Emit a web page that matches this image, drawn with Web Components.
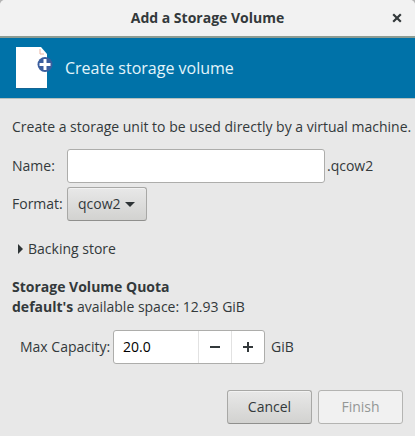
<!DOCTYPE html>
<html lang="en">
<head>
<meta charset="utf-8">
<title>Add a Storage Volume</title>
<style>
html {
	height: 100%;
	background: #b4b4b4;
}

body {
	margin: 0;
	min-height: 100%;
	font: 14px/20px "Open Sans", "Noto Sans", sans-serif;
	color: #33393b;
}
</style>
</head>
<body>
<volume-dialog>
	<title-bar slot="header">Add a Storage Volume</title-bar>
	<page-banner slot="header">Create storage volume</page-banner>

	<volume-form></volume-form>
	<backing-store>Backing store</backing-store>
	<volume-quota pool="default" available="12.93 GiB"></volume-quota>

	<push-button slot="actions">Cancel</push-button>
	<push-button slot="actions" disabled>Finish</push-button>
</volume-dialog>

<script>
const makeTemplate = (html) => {
	const template = document.createElement('template');
	template.innerHTML = html;
	return template;
}

class BaseElement extends HTMLElement {
	constructor() {
		super();

		const shadowRoot = this.attachShadow({mode: 'open'});
		shadowRoot.appendChild(this.constructor.template.content.cloneNode(true));
	}
}

class VolumeDialog extends BaseElement {
	static template = makeTemplate(`
<style>
:host {
	display: flex;
	flex-direction: column;
	box-sizing: border-box;
	min-height: 100vh;
	overflow: hidden;
	border-radius: 5px 5px 0 0;
	background: #e8e8e8;
}

main {
	display: flex;
	flex: 1;
	flex-direction: column;
	padding: 18px 12px 0;
	white-space: nowrap;
}

p {
	margin: 0 0 12px;
}

footer {
	display: flex;
	justify-content: flex-end;
	gap: 6px;
	padding: 12px;
}
</style>

<slot name="header"></slot>
<main>
	<p>Create a storage unit to be used directly by a virtual machine.</p>
	<slot></slot>
</main>
<footer><slot name="actions"></slot></footer>
`);
}
customElements.define('volume-dialog', VolumeDialog);

class TitleBar extends BaseElement {
	static template = makeTemplate(`
<style>
:host {
	display: grid;
	grid-template-columns: 36px 1fr 36px;
	align-items: center;
	height: 36px;
	background: #f2f2f2;
	border-bottom: 2px solid #8d9c93;
}

h1 {
	grid-column: 2;
	margin: 0;
	font-size: 14px;
	line-height: 20px;
	text-align: center;
}

button {
	display: grid;
	place-items: center;
	height: 36px;
	padding: 0;
	border: 0;
	background: none;
	color: inherit;
}
</style>

<h1><slot></slot></h1>
<button type="button" aria-label="Close">
	<svg width="10" height="10" viewBox="0 0 10 10" fill="none" stroke="currentColor" stroke-width="2.2">
		<path d="M1.2 1.2 8.8 8.8M8.8 1.2 1.2 8.8"/>
	</svg>
</button>
`);
}
customElements.define('title-bar', TitleBar);

class PageBanner extends BaseElement {
	static template = makeTemplate(`
<style>
:host {
	display: flex;
	align-items: center;
	gap: 11px;
	height: 60px;
	padding-left: 14px;
	background: #0072a8;
	border-bottom: 1px solid #b4c0bd;
	color: #e3f5fb;
}

h2 {
	margin: 0;
	font-size: 16px;
	font-weight: normal;
	line-height: 24px;
}
</style>

<svg width="40" height="44" viewBox="0 0 40 44" aria-hidden="true">
	<path d="M2 2H27L33 8V43H2Z" fill="#29567d" opacity=".5"/>
	<path d="M2 1H27L33 8V42H2Z" fill="#fff"/>
	<path d="M26 3V8H30" fill="none" stroke="#e9b5a4"/>
	<circle cx="31" cy="18.5" r="7.5" fill="#3b5e9e"/>
	<path d="M31 13V24M25.5 18.5H36.5" stroke="#fff" stroke-width="3"/>
</svg>
<h2><slot></slot></h2>
`);
}
customElements.define('page-banner', PageBanner);

class VolumeForm extends BaseElement {
	static template = makeTemplate(`
<style>
:host {
	display: grid;
	grid-template-columns: 55px 1fr;
	gap: 4px 0;
	align-items: center;
}

.name {
	display: flex;
	align-items: center;
	gap: 2px;
}

input {
	flex: 1;
	box-sizing: border-box;
	min-width: 0;
	height: 34px;
	padding: 0 9px;
	border: 1px solid #adadab;
	border-radius: 3px;
	background: #fff;
	color: #000;
	font: inherit;
}

.suffix {
	width: 76px;
}

.combo {
	display: grid;
	justify-self: start;
	align-items: center;
}

select, .combo svg {
	grid-area: 1 / 1;
}

select {
	appearance: none;
	box-sizing: border-box;
	width: 80px;
	height: 34px;
	padding: 0 22px 0 10px;
	border: 1px solid #a8a8a6;
	border-bottom-color: #8f8f8d;
	border-radius: 3px;
	background: linear-gradient(#e8e8e8, #d2d2d0);
	box-shadow: inset 0 1px #f2f2f2;
	color: inherit;
	font: inherit;
}

.combo svg {
	justify-self: end;
	margin-right: 12px;
	pointer-events: none;
}
</style>

<label for="name">Name:</label>
<div class="name">
	<input id="name" type="text">
	<span class="suffix">.qcow2</span>
</div>
<label for="format">Format:</label>
<div class="combo">
	<select id="format">
		<option>qcow2</option>
	</select>
	<svg width="10" height="5" viewBox="0 0 10 5" aria-hidden="true">
		<path d="M0 0H10L5 5Z" fill="#2e3436"/>
	</svg>
</div>
`);
}
customElements.define('volume-form', VolumeForm);

class BackingStore extends BaseElement {
	static template = makeTemplate(`
<style>
:host {
	display: block;
	margin: 18px 0;
	padding-left: 6px;
}

summary {
	display: flex;
	align-items: center;
	gap: 5px;
	list-style: none;
}

details[open] svg {
	transform: rotate(90deg);
}
</style>

<details>
	<summary>
		<svg width="5" height="10" viewBox="0 0 5 10" aria-hidden="true">
			<path d="M0 0 5 5 0 10Z" fill="#2e3436"/>
		</svg>
		<slot></slot>
	</summary>
</details>
`);
}
customElements.define('backing-store', BackingStore);

class VolumeQuota extends BaseElement {
	static template = makeTemplate(`
<style>
:host {
	display: block;
}

h3, p {
	margin: 0;
	font-size: 14px;
	line-height: 20px;
}

.capacity {
	display: flex;
	align-items: center;
	margin: 13px 0 0 8px;
}

label {
	width: 93px;
}

.spin {
	display: flex;
	box-sizing: border-box;
	width: 152px;
	height: 34px;
	margin-right: 6px;
	overflow: hidden;
	border: 1px solid #adadab;
	border-radius: 3px;
	background: #fff;
}

input {
	flex: 1;
	min-width: 0;
	padding: 0 9px;
	border: 0;
	background: none;
	color: #000;
	font: inherit;
}

button {
	display: grid;
	place-items: center;
	width: 33px;
	padding: 0;
	border: 0;
	border-left: 1px solid #e2e2e2;
	background: none;
	color: inherit;
}
</style>

<h3>Storage Volume Quota</h3>
<p><b id="pool"></b> available space: <span id="available"></span></p>
<div class="capacity">
	<label for="capacity">Max Capacity:</label>
	<div class="spin">
		<input id="capacity" type="text" inputmode="decimal" value="20.0">
		<button id="less" type="button" aria-label="Decrease">
			<svg width="10" height="10" viewBox="0 0 10 10" stroke="currentColor" stroke-width="2">
				<path d="M0 5H10"/>
			</svg>
		</button>
		<button id="more" type="button" aria-label="Increase">
			<svg width="10" height="10" viewBox="0 0 10 10" stroke="currentColor" stroke-width="2">
				<path d="M0 5H10M5 0V10"/>
			</svg>
		</button>
	</div>
	<span>GiB</span>
</div>
`);

	connectedCallback() {
		const root = this.shadowRoot;

		root.querySelector('#pool').textContent = `${this.getAttribute('pool')}'s`;
		root.querySelector('#available').textContent = this.getAttribute('available');
		root.querySelector('#less').onclick = () => this.step(-1);
		root.querySelector('#more').onclick = () => this.step(1);
	}

	step(amount) {
		const input = this.shadowRoot.querySelector('#capacity');
		const value = Number(input.value) || 0;

		input.value = Math.max(0, value + amount).toFixed(1);
	}
}
customElements.define('volume-quota', VolumeQuota);

class PushButton extends BaseElement {
	static template = makeTemplate(`
<style>
:host {
	display: block;
}

button {
	box-sizing: border-box;
	min-width: 85px;
	height: 34px;
	padding: 0 16px;
	border: 1px solid #a8a8a6;
	border-bottom-color: #8f8f8d;
	border-radius: 3px;
	background: linear-gradient(#e8e8e8, #d2d2d0);
	box-shadow: inset 0 1px #f2f2f2;
	color: inherit;
	font: inherit;
}

button:disabled {
	border-color: #b4b4b2;
	background: #f1f1f1;
	box-shadow: none;
	color: #949796;
}
</style>

<button type="button"><slot></slot></button>
`);

	connectedCallback() {
		this.shadowRoot.querySelector('button').disabled = this.hasAttribute('disabled');
	}
}
customElements.define('push-button', PushButton);
</script>
</body>
</html>
